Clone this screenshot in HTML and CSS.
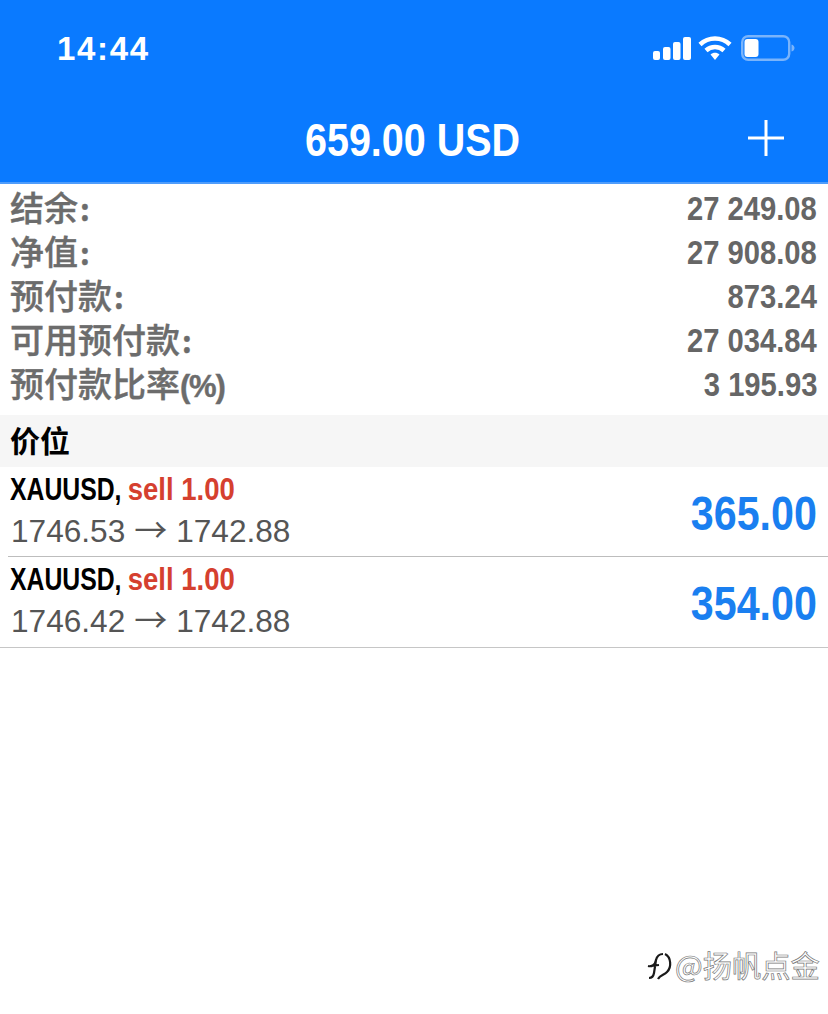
FILE: index.html
```html
<!DOCTYPE html>
<html lang="zh-CN">
<head>
<meta charset="utf-8">
<title>659.00 USD</title>
<link rel="stylesheet" href="styles.css">
</head>
<body>
<div class="page">
  <header class="top">
    <div class="status">
      <span class="time">14:44</span>
      <div class="status-icons">
        <svg class="signal" width="38" height="24" viewBox="0 0 38 24"><rect x="0" y="15" width="7" height="9" rx="2"/><rect x="10" y="11" width="7.500" height="13" rx="2"/><rect x="20" y="6" width="7.500" height="18" rx="2"/><rect x="30" y="1" width="8" height="23" rx="2"/></svg>
        <svg class="wifi" width="34" height="26" viewBox="0 0 34 26"><path d="M2 9.500C10.500 1.500 23.500 1.500 32 9.500" /><path d="M8 15.500C13 10.800 21 10.800 26 15.500"/><path class="wifi-dot" d="M12.500 19.500C15 17.300 19 17.300 21.500 19.500L17 25Z"/></svg>
        <svg class="battery" width="54" height="26" viewBox="0 0 54 26"><rect class="battery-shell" x="1.200" y="1.200" width="47" height="23.600" rx="6"/><rect class="battery-fill" x="3.500" y="4" width="14" height="18" rx="3"/><path class="battery-cap" d="M50.500 9.500C52.500 10 53.500 11.500 53.500 13S52.500 16 50.500 16.500Z"/></svg>
      </div>
    </div>
    <div class="nav">
      <h1 class="title"><span class="squeeze">659.00 USD</span></h1>
      <svg class="plus" width="36" height="36" viewBox="0 0 36 36"><path d="M18 0V36M0 18H36"/></svg>
    </div>
  </header>

  <section class="summary">
    <div class="sum-row"><span class="sum-label">结余<span class="colon">:</span></span><span class="sum-value"><span class="squeeze-r">27 249.08</span></span></div>
    <div class="sum-row"><span class="sum-label">净值<span class="colon">:</span></span><span class="sum-value"><span class="squeeze-r">27 908.08</span></span></div>
    <div class="sum-row"><span class="sum-label">预付款<span class="colon">:</span></span><span class="sum-value"><span class="squeeze-r">873.24</span></span></div>
    <div class="sum-row"><span class="sum-label">可用预付款<span class="colon">:</span></span><span class="sum-value"><span class="squeeze-r">27 034.84</span></span></div>
    <div class="sum-row"><span class="sum-label sum-label-pct">预付款比率<span class="pct">(%)</span></span><span class="sum-value"><span class="squeeze-r">3 195.93</span></span></div>
  </section>

  <div class="section-head">价位</div>

  <section class="positions">
    <div class="pos pos-inset">
      <div class="pos-main">
        <div class="pos-head"><span class="squeeze"><span class="sym">XAUUSD,</span> <span class="side">sell 1.00</span></span></div>
        <div class="pos-price">1746.53<span class="arrow">→</span>1742.88</div>
      </div>
      <div class="pos-profit"><span class="squeeze-r">365.00</span></div>
    </div>
    <div class="pos">
      <div class="pos-main">
        <div class="pos-head"><span class="squeeze"><span class="sym">XAUUSD,</span> <span class="side">sell 1.00</span></span></div>
        <div class="pos-price">1746.42<span class="arrow">→</span>1742.88</div>
      </div>
      <div class="pos-profit"><span class="squeeze-r">354.00</span></div>
    </div>
  </section>

  <div class="watermark">
    <svg class="wm-logo" width="28" height="32" viewBox="0 0 28 32"><path class="wm-f" d="M1 15C5 16 8 14 9 9C10 5 12 3 16 3M9 9L7 22C6.500 25 5 27 2 27M3 15L12 14"/><path class="wm-f" d="M18 3C24 6 25 16 20 21C17 24 13 24 11 28"/></svg>
    <span class="wm-text">@扬帆点金</span>
  </div>
</div>
</body>
</html>
```
FILE: styles.css
```css
* { box-sizing: border-box; }
html, body { margin: 0; padding: 0; background: #fff; }
body { font-family: "Liberation Sans", "Noto Sans CJK SC", sans-serif; }
.page { position: relative; width: 828px; height: 1014px; overflow: hidden; background: #fff; }

.squeeze, .squeeze-r { display: inline-block; white-space: pre; }
.squeeze { transform: scaleX(.86); transform-origin: left center; }
.squeeze-r { transform: scaleX(.885); transform-origin: right center; }

.top { height: 184px; background: #0a7aff; color: #fff; border-bottom: 2px solid #4f9dfb; }
.status { height: 96px; display: flex; justify-content: space-between; align-items: flex-start; padding: 31px 33px 0 57px; }
.time { font-size: 33px; line-height: 36px; font-weight: 700; letter-spacing: 1.700px; }
.status-icons { display: flex; align-items: center; gap: 9px; padding-top: 4px; }
.signal { fill: #fff; margin: 0 -2px 0 0; }
.wifi path { fill: none; stroke: #fff; stroke-width: 4.500; }
.wifi .wifi-dot { fill: #fff; stroke: none; }
.battery-shell { fill: none; stroke: #7ab4fb; stroke-width: 2.400; }
.battery-fill { fill: #fff; }
.battery-cap { fill: #7ab4fb; }

.nav { position: relative; height: 86px; display: flex; justify-content: center; align-items: center; }
.title { margin: 2px 0 0; font-size: 46px; line-height: 50px; font-weight: 700; width: 218px; white-space: nowrap; }
.title .squeeze { transform: scaleX(.858); }
.plus { position: absolute; right: 44px; top: 24px; fill: none; stroke: #fff; stroke-width: 3; }

.summary { padding: 3px 11px 8px 11px; }
.sum-row { height: 44px; display: flex; justify-content: space-between; align-items: center; color: #666; font-weight: 700; }
.sum-label { position: relative; top: -2px; margin-left: -1px; font-family: "Noto Sans CJK SC", sans-serif; font-size: 34px; line-height: 44px; font-weight: 500; color: #6c6c6c; -webkit-text-stroke: .4px #6c6c6c; }
.sum-label-pct { top: 0; }
.colon { margin-left: 2px; font-size: 30px; font-weight: 700; }
.pct { font-family: "Liberation Sans", sans-serif; font-size: 31px; font-weight: 700; letter-spacing: -1.200px; }
.sum-value { font-size: 33px; line-height: 44px; }

.section-head { height: 52px; padding-left: 10px; background: #f6f6f6; color: #000; font-family: "Noto Sans CJK SC", sans-serif; font-size: 30px; font-weight: 700; line-height: 49px; }

.pos { height: 91px; padding: 0 11px; display: flex; justify-content: space-between; align-items: center; border-bottom: 1px solid #c6c6c6; }
.pos-inset { position: relative; height: 90px; border-bottom: 0; }
.pos-inset::after { content: ""; position: absolute; left: 8px; right: 0; bottom: 0; height: 1px; background: #bdbdbd; }
.pos-main { display: flex; flex-direction: column; position: relative; top: -2px; margin-left: -1px; }
.pos-head { font-size: 32px; line-height: 40px; font-weight: 700; white-space: nowrap; }
.sym { display: inline-block; color: #000; transform: scaleX(.9); transform-origin: left center; margin-right: -16px; }
.side { color: #d5402f; }
.pos-price { margin: -1px 0 0 1px; font-size: 31.600px; line-height: 40px; color: #555; white-space: nowrap; }
.arrow { font-family: "Noto Sans CJK SC", sans-serif; font-size: 33px; margin: 0 9px; font-weight: 400; }
.pos-profit { position: relative; top: 2px; font-size: 48px; line-height: 56px; font-weight: 700; color: #1a7ff0; }
.pos-profit .squeeze-r { transform: scaleX(.858); }

.watermark { position: absolute; left: 647px; top: 944px; display: flex; align-items: center; }
.wm-f { fill: none; stroke: #1a1a1a; stroke-width: 2.200; }
.wm-logo { margin-top: 6px; }
.wm-text { font-family: "Noto Sans CJK SC", sans-serif; font-size: 29.300px; line-height: 40px; color: #fff; -webkit-text-stroke: .7px #777; white-space: nowrap; }
```
